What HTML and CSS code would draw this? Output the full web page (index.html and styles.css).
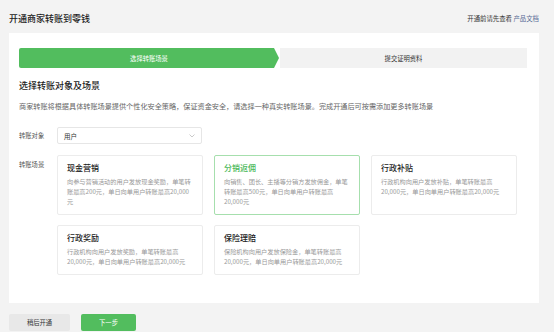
FILE: index.html
```html
<!DOCTYPE html>
<html lang="zh-CN">
<head>
<meta charset="utf-8">
<title>开通商家转账到零钱</title>
<link rel="stylesheet" href="styles.css">
</head>
<body>
<div class="page">
  <header class="top">
    <h1 class="title">开通商家转账到零钱</h1>
    <div class="hint">开通前请先查看 <a class="link" href="#">产品文档</a></div>
  </header>
  <main class="panel">
    <div class="steps">
      <div class="step active">选择转账场景</div>
      <div class="step">提交证明资料</div>
    </div>
    <h2 class="heading">选择转账对象及场景</h2>
    <p class="desc">商家转账将根据具体转账场景提供个性化安全策略，保证资金安全，请选择一种真实转账场景。完成开通后可按需添加更多转账场景</p>
    <div class="row row-target">
      <div class="label">转账对象</div>
      <div class="select">
        <span>用户</span>
        <svg class="chev" width="6" height="4" viewBox="0 0 6 4"><path d="M0.5 0.5 L3 3 L5.5 0.5" fill="none" stroke="#c4c4c4" stroke-width="0.9"/></svg>
      </div>
    </div>
    <div class="row row-scene">
      <div class="label label-scene">转账场景</div>
      <div class="cards">
        <div class="card">
          <div class="card-title">现金营销</div>
          <div class="card-desc">向参与营销活动的用户发放现金奖励，单笔转账最高200元，单日向单用户转账最高20,000元</div>
        </div>
        <div class="card selected">
          <div class="card-title">分销返佣</div>
          <div class="card-desc">向销售、团长、主播等分销方发放佣金，单笔转账最高500元，单日向单用户转账最高20,000元</div>
        </div>
        <div class="card">
          <div class="card-title">行政补贴</div>
          <div class="card-desc">行政机构向用户发放补贴，单笔转账最高20,000元，单日向单用户转账最高20,000元</div>
        </div>
        <div class="card">
          <div class="card-title">行政奖励</div>
          <div class="card-desc">行政机构向用户发放奖励，单笔转账最高20,000元，单日向单用户转账最高20,000元</div>
        </div>
        <div class="card">
          <div class="card-title">保险理赔</div>
          <div class="card-desc">保险机构向用户发放保险金，单笔转账最高20,000元，单日向单用户转账最高20,000元</div>
        </div>
      </div>
    </div>
  </main>
  <footer class="actions">
    <button class="btn btn-gray">稍后开通</button>
    <button class="btn btn-green">下一步</button>
  </footer>
</div>
</body>
</html>
```
FILE: styles.css
```css
* { box-sizing: border-box; }
html, body { margin: 0; padding: 0; }
body {
  background: #f3f3f3;
  font-family: "Noto Sans CJK SC", "Noto Sans", sans-serif;
  color: #333;
  width: 554px;
  height: 332px;
  overflow: hidden;
}
.page { padding: 0 15px 0 9px; }
.top {
  height: 33px;
  display: flex;
  justify-content: space-between;
  align-items: flex-start;
  padding-top: 14px;
}
.title {
  margin: 0;
  font-size: 9px;
  line-height: 10px;
  font-weight: 500;
  color: #222;
}
.hint {
  font-size: 6.4px;
  line-height: 10px;
  color: #333;
}
.link { color: #576b95; text-decoration: none; }
.panel {
  background: #fff;
  padding: 15px 12px 28px 10px;
}
.steps {
  display: flex;
  gap: 1px;
  height: 20px;
}
.step {
  display: flex;
  align-items: center;
  justify-content: center;
  font-size: 6.3px;
  color: #333;
  background: #f2f2f2;
  flex: 1;
}
.step.active {
  flex: 0 0 260px;
  background: #52bd5e;
  color: #fff;
  border-radius: 2px 0 0 2px;
  clip-path: polygon(0 0, calc(100% - 5px) 0, 100% 50%, calc(100% - 5px) 100%, 0 100%);
}
.heading {
  margin: 12px 0 0;
  font-size: 9px;
  line-height: 12px;
  font-weight: 500;
  color: #222;
}
.desc {
  margin: 9px 0 0;
  font-size: 7.15px;
  line-height: 10px;
  color: #666;
  white-space: nowrap;
}
.row { display: flex; }
.row-target { margin-top: 16px; align-items: center; }
.row-scene { margin-top: 11px; }
.label {
  width: 38px;
  font-size: 6.3px;
  line-height: 10px;
  color: #555;
}
.label-scene { padding-top: 5px; }
.select {
  width: 145px;
  height: 17px;
  border: 1px solid #e6e6e6;
  border-radius: 2px;
  display: flex;
  align-items: center;
  justify-content: space-between;
  padding: 0 6px 0 6px;
  font-size: 6.5px;
  color: #333;
}
.chev { display: block; }
.cards {
  display: grid;
  grid-template-columns: repeat(3, 146px);
  column-gap: 11px;
  row-gap: 10px;
}
.card {
  border: 1px solid #ececec;
  border-radius: 2px;
  padding: 7px 9px 7px 9px;
}
.card.selected { border-color: #a6dfad; }
.card-title {
  font-size: 8px;
  line-height: 10px;
  font-weight: 500;
  color: #222;
  margin-bottom: 4px;
}
.card.selected .card-title { color: #4cb95a; }
.card-desc {
  font-size: 6.2px;
  line-height: 10px;
  color: #999;
}
.actions {
  margin-top: 11px;
  display: flex;
  gap: 11px;
}
.btn {
  border: 0;
  border-radius: 2px;
  height: 17px;
  font-family: inherit;
  font-size: 6.3px;
  padding: 0;
  cursor: pointer;
}
.btn-gray { width: 61px; background: #e8e8e8; color: #333; }
.btn-green { width: 55px; background: #52bd5e; color: #fff; }
```
